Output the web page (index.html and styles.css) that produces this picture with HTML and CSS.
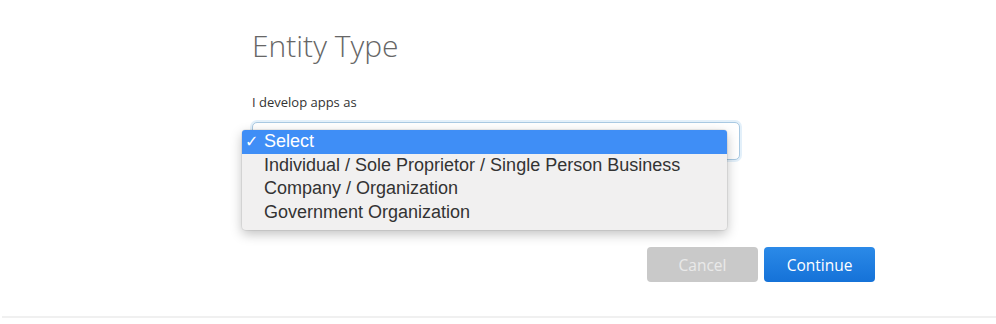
FILE: index.html
```html
<!DOCTYPE html>
<html lang="en">
<head>
    <meta charset="UTF-8">
    <meta name="viewport" content="width=device-width, initial-scale=1.0">
    <title>Entity Type</title>
    <link rel="stylesheet" href="styles.css">
</head>
<body>
    <div class="page">
        <h1 class="title">Entity Type</h1>
        <p class="label">I develop apps as</p>

        <!-- Select mit geoeffneter Liste -->
        <div class="field">
            <div class="select-box"></div>
            <ul class="dropdown">
                <li class="option selected"><span class="check">&#10003;</span>Select</li>
                <li class="option">Individual / Sole Proprietor / Single Person Business</li>
                <li class="option">Company / Organization</li>
                <li class="option">Government Organization</li>
            </ul>
        </div>

        <div class="actions">
            <button class="button cancel">Cancel</button>
            <button class="button primary">Continue</button>
        </div>
    </div>
    <div class="footer-line"></div>
</body>
</html>
```

FILE: styles.css
```css
body {
    margin: 0;
    font-family: "Open Sans", Arial, sans-serif;
    background-color: #fff;
}
.page {
    width: 623px;
    margin-left: 252px;
    padding-top: 27px;
}
.title {
    margin: 0;
    font-size: 30px;
    line-height: 38px;
    font-weight: 300;
    color: #666;
}
.label {
    margin: 28px 0 0;
    font-size: 13px;
    line-height: 18px;
    color: #333;
}
.field {
    position: relative;
    margin-top: 11px;
    width: 488px;
}
.select-box {
    height: 36px;
    border: 1px solid #a9c9e2;
    border-radius: 5px;
    box-shadow: 0 0 0 2px #e3f0fa;
    background: #fff;
}
.dropdown {
    position: absolute;
    left: -10px;
    top: 8px;
    width: 485px;
    margin: 0;
    padding: 0 0 6px;
    list-style: none;
    background: #f1f0f0;
    border-radius: 4px;
    box-shadow: 0 4px 12px rgba(0, 0, 0, 0.25), 0 0 0 1px rgba(0, 0, 0, 0.06);
    z-index: 2;
}
.option {
    position: relative;
    padding-left: 22px;
    font-family: "Liberation Sans", Arial, sans-serif;
    font-size: 18px;
    line-height: 23.5px;
    color: #333;
}
.option.selected {
    background: #3f8ef6;
    color: #fff;
    border-radius: 3px 3px 0 0;
}
.check {
    position: absolute;
    left: 3px;
    font-family: "DejaVu Sans", sans-serif;
    font-size: 16px;
    font-weight: bold;
}
.actions {
    display: flex;
    justify-content: flex-end;
    gap: 6px;
    margin-top: 87px;
}
.button {
    width: 111px;
    height: 35px;
    font-family: "Open Sans", Arial, sans-serif;
    font-size: 15.5px;
    border: none;
    border-radius: 4px;
    cursor: pointer;
}
.button.cancel {
    background: #c9c9c9;
    color: #e9e9e9;
}
.button.primary {
    background: linear-gradient(#2b8ae8, #1572d8);
    color: #fff;
}
.footer-line {
    margin: 34px 0 0 2px;
    border-top: 2px solid #f0f0f0;
}
```
